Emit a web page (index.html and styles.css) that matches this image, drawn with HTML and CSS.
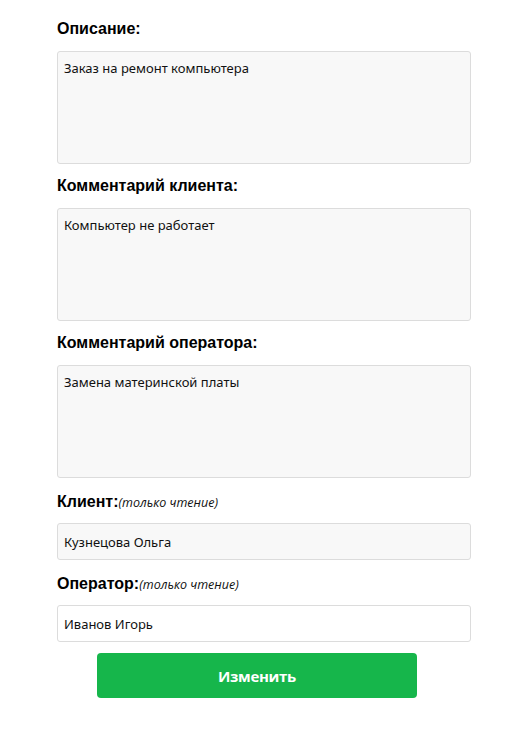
FILE: index.html
```html
<!DOCTYPE html>
<html lang="ru">
<head>
<meta charset="utf-8">
<link rel="stylesheet" href="styles.css">
</head>
<body>
<form class="form">
  <label class="label">Описание:</label>
  <textarea class="area">Заказ на ремонт компьютера</textarea>
  <label class="label">Комментарий клиента:</label>
  <textarea class="area">Компьютер не работает</textarea>
  <label class="label">Комментарий оператора:</label>
  <textarea class="area">Замена материнской платы</textarea>
  <label class="label label-ro">Клиент:<span class="note">(только чтение)</span></label>
  <input class="field field-grey" type="text" value="Кузнецова Ольга" readonly>
  <label class="label label-ro">Оператор:<span class="note">(только чтение)</span></label>
  <input class="field" type="text" value="Иванов Игорь" readonly>
  <button class="btn" type="button">Изменить</button>
</form>
</body>
</html>
```

FILE: styles.css
```css
html, body {
  margin: 0;
  padding: 0;
  background: #fff;
}
body {
  padding: 20px 0 0 57px;
  font-family: "Noto Sans", "Open Sans", sans-serif;
}
.form {
  width: 414px;
  display: flex;
  flex-direction: column;
}
.label {
  display: block;
  font-family: "Liberation Sans", Arial, sans-serif;
  font-weight: bold;
  font-size: 16px;
  line-height: 18px;
  color: #000;
  margin: 13px 0 13px;
}
.label:first-child {
  margin-top: 0;
}
.label-ro {
  margin: 15px 0 12px;
}
.note {
  font-family: "Open Sans", "Noto Sans", sans-serif;
  font-style: italic;
  font-weight: normal;
  font-size: 12.5px;
  line-height: 0;
  color: #111;
}
.area {
  box-sizing: border-box;
  width: 414px;
  height: 113px;
  margin: 0;
  padding: 7px 6px;
  border: 1px solid #dcdcdc;
  border-radius: 3px;
  background: #f8f8f8;
  font-family: "Noto Sans", "Open Sans", sans-serif;
  font-size: 13px;
  line-height: 18px;
  color: #111;
  resize: none;
  outline: none;
}
.field {
  box-sizing: border-box;
  width: 414px;
  height: 37px;
  margin: 0;
  padding: 0 6px;
  border: 1px solid #dcdcdc;
  border-radius: 3px;
  background: #fff;
  font-family: "Noto Sans", "Open Sans", sans-serif;
  font-size: 13px;
  color: #111;
  outline: none;
}
.field-grey {
  background: #f8f8f8;
}
.btn {
  align-self: flex-start;
  margin: 11px 0 0 40px;
  width: 320px;
  height: 45px;
  border: none;
  border-radius: 4px;
  background: #16b64b;
  color: #fff;
  font-family: "Open Sans", "Noto Sans", sans-serif;
  font-weight: bold;
  font-size: 15px;
  letter-spacing: -0.3px;
  cursor: pointer;
}
```
